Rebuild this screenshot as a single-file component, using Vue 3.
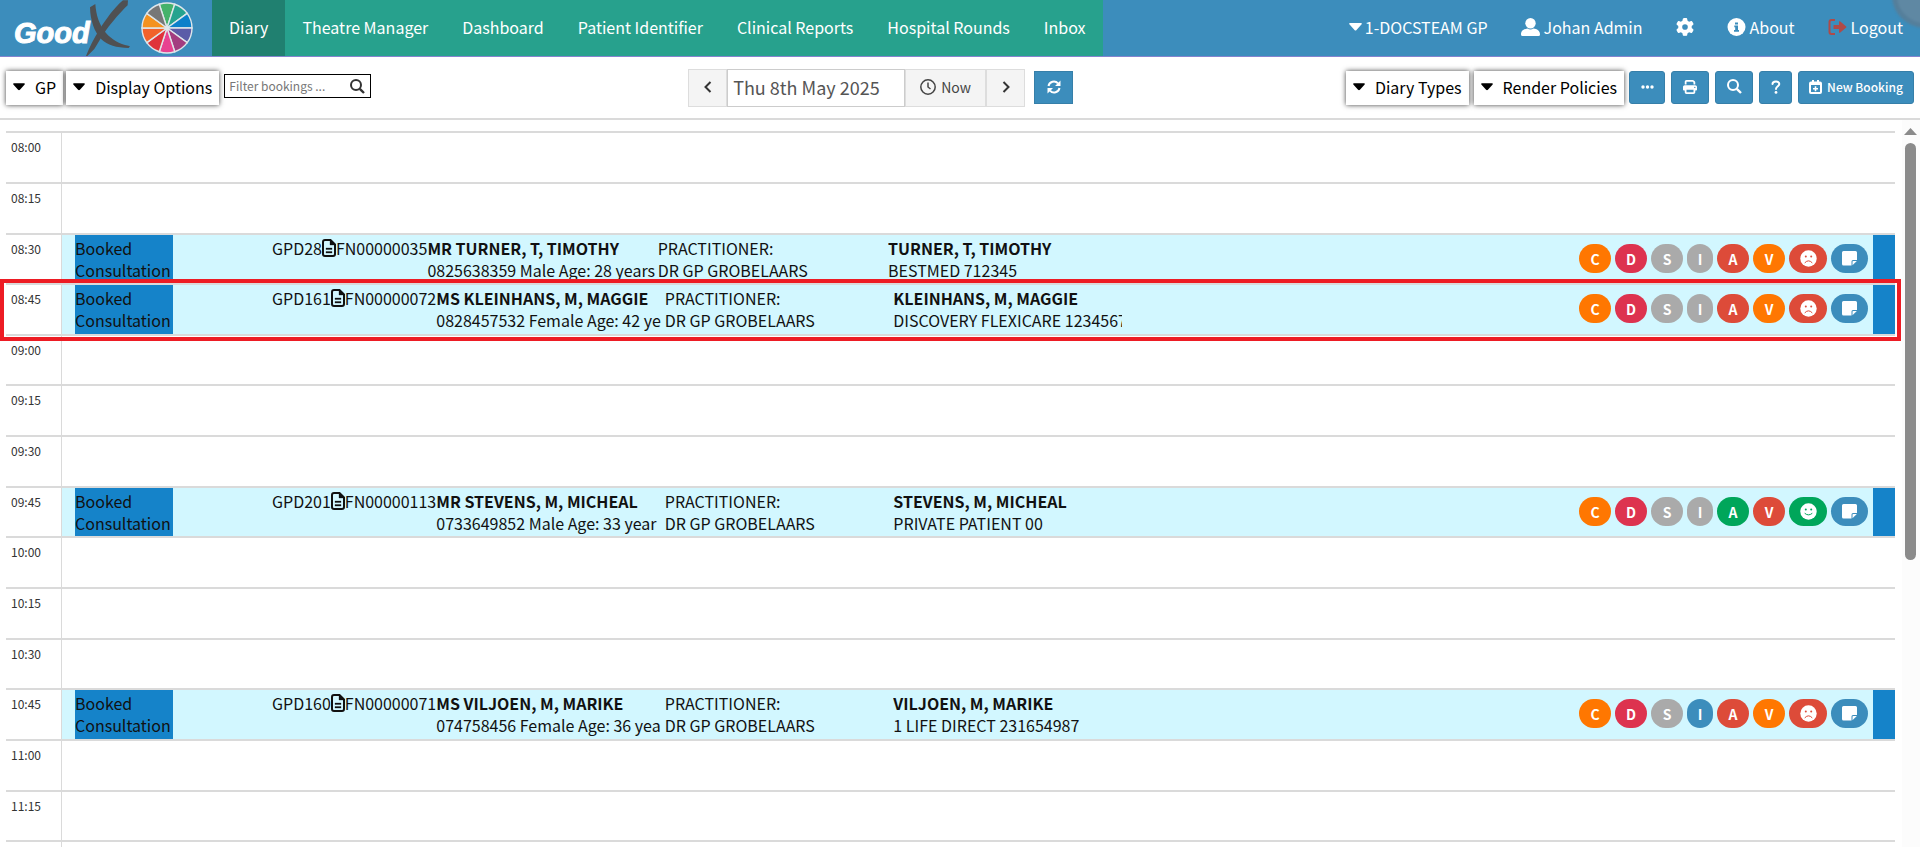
<script setup>
import { ref } from 'vue'

const tabs = ['Diary', 'Theatre Manager', 'Dashboard', 'Patient Identifier', 'Clinical Reports', 'Hospital Rounds', 'Inbox']
const filter = ref('')
const date = ref('Thu 8th May 2025')

const wheelColours = ['#45b26b', '#26a38f', '#0b80ca', '#5b5ca8', '#a33d80', '#e84291', '#df333a', '#f1622a', '#f4921f', '#777777']
const wheel = wheelColours.map((colour, i) => {
  const point = (deg) => {
    const a = (deg * Math.PI) / 180
    return `${(167 + 25 * Math.sin(a)).toFixed(2)} ${(28 - 25 * Math.cos(a)).toFixed(2)}`
  }
  return { colour, d: `M167 28L${point(i * 36 - 18)}A25 25 0 0 1 ${point(i * 36 + 18)}Z` }
})

const badges = (s) => {
  const tones = s.split(' ')
  return ['C', 'D', 'S', 'I', 'A', 'V'].map((letter, i) => ({ letter, tone: tones[i] }))
}

const bookings = {
  '08:30': {
    ref: 'GPD28', file: 'FN00000035', name: 'MR TURNER, T, TIMOTHY', detail: '0825638359 Male Age: 28 years',
    member: 'TURNER, T, TIMOTHY', scheme: 'BESTMED 712345',
    badges: badges('orange crimson grey grey red orange'), happy: false
  },
  '08:45': {
    ref: 'GPD161', file: 'FN00000072', name: 'MS KLEINHANS, M, MAGGIE', detail: '0828457532 Female Age: 42 ye',
    member: 'KLEINHANS, M, MAGGIE', scheme: 'DISCOVERY FLEXICARE 1234567',
    badges: badges('orange crimson grey grey red orange'), happy: false, marked: true
  },
  '09:45': {
    ref: 'GPD201', file: 'FN00000113', name: 'MR STEVENS, M, MICHEAL', detail: '0733649852 Male Age: 33 year',
    member: 'STEVENS, M, MICHEAL', scheme: 'PRIVATE PATIENT 00',
    badges: badges('orange crimson grey grey green red'), happy: true
  },
  '10:45': {
    ref: 'GPD160', file: 'FN00000071', name: 'MS VILJOEN, M, MARIKE', detail: '074758456 Female Age: 36 yea',
    member: 'VILJOEN, M, MARIKE', scheme: '1 LIFE DIRECT 231654987',
    badges: badges('orange crimson grey blue red orange'), happy: false
  }
}

const slots = Array.from({ length: 15 }, (_, i) => {
  const minutes = 480 + i * 15
  const time = `${String(Math.floor(minutes / 60)).padStart(2, '0')}:${String(minutes % 60).padStart(2, '0')}`
  return { time, booking: bookings[time] }
})
</script>

<template>
  <div class="app">
    <header class="header">
      <a href="#" class="brand" aria-label="GoodX">
        <svg width="212" height="56" viewBox="0 0 212 56">
          <text x="14" y="43" class="brand-text">Good</text>
          <g transform="scale(.3333)" fill="#4f5052">
            <path d="M270 22L286 12C288 45 298 75 318 99C336 119 358 132 385 137L390 139L386 144C350 144 322 135 304 118C283 96 271 62 270 22Z" />
            <path d="M369 1H384L383 16C362 36 338 64 318 91C305 109 294 130 283 147L262 168H258C268 143 282 115 299 88C319 57 341 25 369 1Z" />
          </g>
          <g stroke="#dfe6ea" stroke-width="1.4">
            <path v-for="w in wheel" :key="w.colour" :d="w.d" :fill="w.colour" />
          </g>
          <circle cx="167" cy="28" r="2" fill="#dfe6ea" />
        </svg>
      </a>
      <nav class="tabs">
        <a v-for="(tab, i) in tabs" :key="tab" href="#" class="tab" :class="{ active: i === 0 }">{{ tab }}</a>
      </nav>
      <nav class="account">
        <a href="#" class="account-item caret-item">
          <svg width="13" height="8" viewBox="0 0 13 8"><path d="M1 0H12Q13.500 .5 12.400 1.600L7.500 7Q6.500 8 5.500 7L.6 1.600Q-.5 .5 1 0Z" fill="#fff" /></svg>
          1-DOCSTEAM GP
        </a>
        <a href="#" class="account-item">
          <svg width="19" height="18" viewBox="0 0 19 18" fill="#fff"><ellipse cx="9.500" cy="5.300" rx="5.200" ry="5.300" /><path d="M0 16.500C0 12.500 3 11 6.500 10.500Q9.500 12.500 12.500 10.500C16 11 19 12.500 19 16.500Q19 18 17.500 18H1.500Q0 18 0 16.500Z" /></svg>
          Johan Admin
        </a>
        <a href="#" class="account-item" aria-label="Settings">
          <svg width="18" height="18" viewBox="0 0 512 512" fill="#fff"><path d="M495.9 166.6c3.2 8.7 .5 18.4-6.4 24.6l-43.3 39.4c1.1 8.3 1.7 16.800 1.7 25.400s-.6 17.100-1.700 25.400l43.300 39.400c6.900 6.200 9.600 15.900 6.400 24.600c-4.400 11.900-9.700 23.300-15.800 34.300l-4.700 8.100c-6.600 11-14 21.400-22.100 31.200c-5.900 7.200-15.700 9.600-24.500 6.800l-55.700-17.700c-13.400 10.300-28.200 18.900-44 25.400l-12.500 57.100c-2 9.100-9 16.300-18.200 17.800c-13.800 2.300-28 3.500-42.500 3.500s-28.700-1.200-42.500-3.500c-9.200-1.500-16.200-8.700-18.200-17.800l-12.500-57.100c-15.800-6.500-30.600-15.100-44-25.400L83.100 425.900c-8.800 2.800-18.600 .3-24.500-6.800c-8.100-9.800-15.500-20.200-22.100-31.200l-4.700-8.100c-6.100-11-11.400-22.400-15.800-34.300c-3.200-8.700-.5-18.400 6.400-24.600l43.300-39.400C64.600 273.100 64 264.600 64 256s.6-17.100 1.700-25.400L22.400 191.200c-6.900-6.200-9.600-15.900-6.400-24.600c4.400-11.900 9.700-23.300 15.800-34.300l4.700-8.100c6.600-11 14-21.400 22.100-31.200c5.900-7.200 15.700-9.600 24.500-6.800l55.700 17.700c13.400-10.300 28.200-18.900 44-25.400l12.500-57.100c2-9.100 9-16.300 18.200-17.800C227.300 1.200 241.500 0 256 0s28.700 1.200 42.500 3.500c9.200 1.500 16.200 8.700 18.200 17.800l12.500 57.100c15.800 6.500 30.600 15.100 44 25.400l55.700-17.700c8.800-2.800 18.600-.3 24.500 6.800c8.100 9.800 15.500 20.200 22.100 31.200l4.700 8.100c6.100 11 11.400 22.400 15.800 34.300zM256 336a80 80 0 1 0 0-160 80 80 0 1 0 0 160z" /></svg>
        </a>
        <a href="#" class="account-item">
          <svg width="19" height="18" viewBox="0 0 19 18"><circle cx="9.500" cy="9" r="9" fill="#fff" /><path d="M8 4.500h3v2H8zM7.300 7.500H11v4.500h1v1.700H7V12h1.200V9.200h-.9z" fill="#3c8dbc" /></svg>
          About
        </a>
        <a href="#" class="account-item">
          <svg width="19" height="18" viewBox="0 0 19 18"><path d="M7 2H3.500Q1.500 2 1.500 4V14Q1.500 16 3.500 16H7" fill="none" stroke="#b04a48" stroke-width="2" /><path d="M6 7H11V3.500Q11.500 2.800 12.300 3.500L18.200 8.400Q18.800 9 18.200 9.600L12.300 14.500Q11.500 15.200 11 14.500V11H6Q5.500 11 5.500 10.500V7.500Q5.500 7 6 7Z" fill="#b04a48" /></svg>
          Logout
        </a>
      </nav>
      <span class="bubble"></span>
    </header>

    <div class="toolbar">
      <div class="tool-left">
        <button type="button" class="menu">
          <svg width="12" height="8" viewBox="0 0 13 8"><path d="M1 0H12Q13.500 .5 12.400 1.600L7.500 7Q6.500 8 5.500 7L.6 1.600Q-.5 .5 1 0Z" /></svg>GP
        </button>
        <button type="button" class="menu">
          <svg width="12" height="8" viewBox="0 0 13 8"><path d="M1 0H12Q13.500 .5 12.400 1.600L7.500 7Q6.500 8 5.500 7L.6 1.600Q-.5 .5 1 0Z" /></svg>Display Options
        </button>
        <label class="filter">
          <input v-model="filter" type="text" placeholder="Filter bookings ..." aria-label="Filter bookings">
          <svg width="15" height="15" viewBox="0 0 15 15" fill="none" stroke="#333" stroke-width="2"><circle cx="6" cy="6" r="5" /><path d="M9.800 9.800L14 14" stroke-width="2.400" /></svg>
        </label>
      </div>

      <div class="tool-centre">
        <div class="date-group">
          <button type="button" class="step" aria-label="Previous day"><svg width="8" height="12" viewBox="0 0 8 12"><path d="M6.500 1L1.500 6L6.500 11" fill="none" stroke="#333" stroke-width="2" /></svg></button>
          <input v-model="date" class="date" type="text" aria-label="Date">
          <button type="button" class="now">
            <svg width="16" height="16" viewBox="0 0 16 16" fill="none" stroke="#444" stroke-width="1.500"><circle cx="8" cy="8" r="7.200" /><path d="M8 3.500V8L10.500 10" /></svg>
            Now
          </button>
          <button type="button" class="step" aria-label="Next day"><svg width="8" height="12" viewBox="0 0 8 12"><path d="M1.500 1L6.500 6L1.500 11" fill="none" stroke="#333" stroke-width="2" /></svg></button>
        </div>
        <button type="button" class="refresh" aria-label="Refresh">
          <svg width="14" height="14" viewBox="0 0 14 14"><path d="M1.500 6A5.500 5.500 0 0 1 11 3.300M12.500 8A5.500 5.500 0 0 1 3 10.700" fill="none" stroke="#fff" stroke-width="2" /><path d="M13.500 .5V6H8zM.5 13.500V8H6z" fill="#fff" /></svg>
        </button>
      </div>

      <div class="tool-right">
        <button type="button" class="menu">
          <svg width="12" height="8" viewBox="0 0 13 8"><path d="M1 0H12Q13.500 .5 12.400 1.600L7.500 7Q6.500 8 5.500 7L.6 1.600Q-.5 .5 1 0Z" /></svg>Diary Types
        </button>
        <button type="button" class="menu">
          <svg width="12" height="8" viewBox="0 0 13 8"><path d="M1 0H12Q13.500 .5 12.400 1.600L7.500 7Q6.500 8 5.500 7L.6 1.600Q-.5 .5 1 0Z" /></svg>Render Policies
        </button>
        <div class="actions">
          <button type="button" class="action narrow" aria-label="More"><svg width="13" height="4" viewBox="0 0 13 4" fill="#fff"><circle cx="2" cy="2" r="1.700" /><circle cx="6.500" cy="2" r="1.700" /><circle cx="11" cy="2" r="1.700" /></svg></button>
          <button type="button" class="action" aria-label="Print"><svg width="14" height="14" viewBox="0 0 512 512" fill="#fff"><path d="M128 0C92.700 0 64 28.700 64 64v96h64V64H354.700L384 93.300V160h64V93.300c0-17-6.700-33.300-18.700-45.300L400 18.700C388 6.700 371.700 0 354.700 0H128zM384 352v32 64H128V384 368 352H384zm64 32h32c17.700 0 32-14.300 32-32V256c0-35.300-28.700-64-64-64H64c-35.300 0-64 28.700-64 64v96c0 17.700 14.300 32 32 32H64v64c0 35.300 28.700 64 64 64H384c35.300 0 64-28.700 64-64V384zM432 248a24 24 0 1 1 0 48 24 24 0 1 1 0-48z" /></svg></button>
          <button type="button" class="action" aria-label="Search"><svg width="15" height="15" viewBox="0 0 15 15" fill="none" stroke="#fff" stroke-width="2"><circle cx="6" cy="6" r="5" /><path d="M9.800 9.800L14 14" stroke-width="2.400" /></svg></button>
          <button type="button" class="action help" aria-label="Help"><svg width="10" height="14" viewBox="0 0 10 14"><path d="M1.500 4C1.500 1 8.300 .4 8.300 4C8.300 6.200 5 6.300 5 9" fill="none" stroke="#fff" stroke-width="2" stroke-linecap="round" /><circle cx="5" cy="12.400" r="1.400" fill="#fff" /></svg></button>
          <button type="button" class="action booking-new">
            <svg width="13" height="14" viewBox="0 0 13 14"><path d="M1 3.500Q1 2.500 2 2.500H11Q12 2.500 12 3.500V12Q12 13 11 13H2Q1 13 1 12Z" fill="none" stroke="#fff" stroke-width="2" /><path d="M1 2.500H12V5H1zM3 0H5V3H3zM8 0H10V3H8z" fill="#fff" /><path d="M6.500 6.300V11.300M4 8.800H9" stroke="#fff" stroke-width="1.600" /></svg>
            New Booking
          </button>
        </div>
      </div>
    </div>

    <main class="schedule">
      <table class="diary" aria-label="Diary">
        <tbody>
          <tr v-for="slot in slots" :key="slot.time">
            <th scope="row">{{ slot.time }}</th>
            <td>
              <div v-if="slot.booking" class="booking">
                <div class="status"><span>Booked Consultation</span></div>
                <div class="file">
                  {{ slot.booking.ref }}<svg width="14" height="18" viewBox="0 0 14 18"><path d="M3 1H8.500L13 5.500V15Q13 17 11 17H3Q1 17 1 15V3Q1 1 3 1Z" fill="none" stroke="#111" stroke-width="2" /><path d="M8 1V6H13ZM4 9H10V10.500H4ZM4 12.500H10V14H4Z" fill="#111" stroke="#111" stroke-width=".3" /></svg>{{ slot.booking.file }}
                </div>
                <div class="col"><strong>{{ slot.booking.name }}</strong><br>{{ slot.booking.detail }}</div>
                <div class="col">PRACTITIONER:<br>DR GP GROBELAARS</div>
                <div class="col"><strong>{{ slot.booking.member }}</strong><br>{{ slot.booking.scheme }}</div>
                <div class="col"></div>
                <div class="col"></div>
                <div class="badges">
                  <button v-for="b in slot.booking.badges" :key="b.letter" type="button" class="badge" :class="[b.tone, { slim: b.letter === 'I' }]">{{ b.letter }}</button>
                  <button type="button" class="badge mood" :class="slot.booking.happy ? 'green' : 'red'" :aria-label="slot.booking.happy ? 'Happy' : 'Unhappy'">
                    <svg width="17" height="17" viewBox="0 0 17 17">
                      <circle cx="8.500" cy="8.500" r="8.200" fill="#fff" />
                      <g :fill="slot.booking.happy ? '#00a65a' : '#dd4b39'"><circle cx="5.800" cy="6.600" r="1" /><circle cx="11.200" cy="6.600" r="1" /></g>
                      <path :d="slot.booking.happy ? 'M5 10.500Q8.500 13.500 12 10.500' : 'M5 12.600Q8.500 8.800 12 12.600'" fill="none" :stroke="slot.booking.happy ? '#00a65a' : '#dd4b39'" stroke-width="1" stroke-linecap="round" />
                    </svg>
                  </button>
                  <button type="button" class="badge note blue" aria-label="Note">
                    <svg width="15" height="15" viewBox="0 0 15 15" fill="#fff"><path d="M1.500 0H13.500Q15 0 15 1.500V9H11Q9.500 9 9.500 10.500V14.500H1.500Q0 14.500 0 13V1.500Q0 0 1.500 0Z" /><path d="M10.500 14.300V10.800Q10.500 10 11.300 10H14.800Z" /></svg>
                  </button>
                </div>
                <div class="edge"></div>
              </div>
              <div v-if="slot.booking && slot.booking.marked" class="marker"></div>
            </td>
          </tr>
        </tbody>
      </table>
      <div class="rail" aria-hidden="true">
        <svg width="13" height="7" viewBox="0 0 13 7"><path d="M6.500 0L13 7H0Z" fill="#8b8b8b" /></svg>
        <div class="thumb"></div>
      </div>
    </main>
  </div>
</template>

<style>
body {
  margin: 0;
  background: #fff;
}
</style>

<style scoped>
.app,
.app * {
  box-sizing: border-box;
}
.app {
  display: flex;
  flex-direction: column;
  height: 100vh;
  overflow: hidden;
  font-family: "Noto Sans CJK SC", "Noto Sans", sans-serif;
  font-size: 16px;
  line-height: 22px;
  color: #111;
}
button,
input {
  margin: 0;
  font-family: inherit;
}
button {
  cursor: pointer;
}
svg {
  flex: none;
  display: block;
}

.header {
  position: relative;
  display: flex;
  flex: none;
  height: 57px;
  overflow: hidden;
  background: #3c8dbc;
  border-bottom: 1px solid #8484cf;
}
.brand {
  flex: none;
}
.brand-text {
  font: italic bold 29px "Liberation Sans", sans-serif;
  fill: #fff;
  stroke: #fff;
  stroke-width: 1px;
}
.tabs {
  display: flex;
  background: #27a18d;
}
.tab {
  display: flex;
  align-items: center;
  padding: 0 17px 2px;
  color: #fff;
  text-decoration: none;
  white-space: nowrap;
}
.tab.active {
  background: #208070;
}
.account {
  display: flex;
  gap: 33px;
  margin-left: auto;
  padding: 0 17px 2px 0;
}
.account-item {
  display: flex;
  align-items: center;
  gap: 4px;
  color: #fff;
  text-decoration: none;
  white-space: nowrap;
}
.caret-item {
  gap: 3px;
}
.bubble {
  position: absolute;
  top: -38px;
  right: -38px;
  width: 66px;
  height: 66px;
  border: 5px solid #557f9b;
  border-radius: 50%;
  background: #5f88a3;
  filter: blur(1px);
}

.toolbar {
  display: grid;
  grid-template-columns: auto 1fr auto;
  flex: none;
  height: 63px;
  padding: 12px 6px 0;
  border-bottom: 2px solid #dadada;
}
.tool-left,
.tool-right,
.tool-centre,
.date-group,
.actions {
  display: flex;
  align-items: flex-start;
}
.tool-left {
  gap: 3px;
  padding-top: 2px;
}
.tool-right {
  justify-content: flex-end;
  gap: 5px;
  padding-top: 2px;
}
.menu {
  display: flex;
  align-items: center;
  gap: 10px;
  height: 34px;
  padding: 0 7px 2px;
  border: 0;
  background: #fff;
  box-shadow: 0 0 5px rgba(0, 0, 0, .75);
  color: #000;
  font-size: 16px;
  white-space: nowrap;
}
.filter {
  display: flex;
  align-items: center;
  width: 147px;
  height: 24px;
  margin: 3px 0 0 2px;
  padding: 0 5px 0 4px;
  border: 1px solid #000;
}
.filter input {
  flex: 1;
  min-width: 0;
  height: 20px;
  padding: 0 0 2px;
  border: 0;
  outline: 0;
  background: none;
  font-size: 12px;
  color: #333;
}
.filter input::placeholder {
  color: #777;
  opacity: 1;
}
.tool-centre {
  justify-content: center;
  gap: 9px;
  padding-left: 44px;
}
.date-group button {
  display: flex;
  align-items: center;
  justify-content: center;
  gap: 5px;
  height: 38px;
  padding: 0 0 3px;
  border: 1px solid #ddd;
  background: #f4f4f4;
  color: #444;
  font-size: 14px;
}
.step {
  width: 39px;
}
.now {
  width: 81px;
}
.date {
  width: 178px;
  height: 38px;
  padding: 0 5px 2px;
  border: 1px solid #ccc;
  outline: 0;
  background: #fff;
  color: #555;
  font-size: 18px;
}
.refresh,
.action {
  display: flex;
  align-items: center;
  justify-content: center;
  height: 33px;
  padding: 0 0 2px;
  border: 1px solid #367fa9;
  background: #3c8dbc;
  color: #fff;
}
.refresh {
  width: 39px;
  margin-top: 2px;
}
.actions {
  gap: 6px;
}
.action {
  width: 38px;
  border-radius: 3px;
}
.narrow {
  width: 36px;
}
.help {
  width: 33px;
}
.booking-new {
  gap: 5px;
  width: 116px;
  font-size: 12px;
  font-weight: 500;
  white-space: nowrap;
}

.schedule {
  display: flex;
  flex: 1;
  align-items: flex-start;
  min-height: 0;
  padding-left: 6px;
  overflow: hidden;
}
.diary {
  flex: 1;
  margin-top: 11px;
  border-collapse: separate;
  border-spacing: 0;
  table-layout: fixed;
}
tr {
  height: 51px;
}
tr:nth-child(3),
tr:nth-child(3n + 5) {
  height: 50px;
}
th,
td {
  padding: 0;
  border-top: 2px solid #dadada;
  vertical-align: top;
}
th {
  width: 55px;
  padding: 3px 0 0 5px;
  font-size: 12px;
  font-weight: 400;
  text-align: left;
  color: #333;
}
td {
  position: relative;
  border-left: 1px solid #dadada;
}
.booking {
  display: flex;
  height: 49px;
  padding-left: 13px;
  overflow: hidden;
  background: #d2f7ff;
  white-space: nowrap;
}
tr:nth-child(3) .booking,
tr:nth-child(3n + 5) .booking {
  height: 48px;
}
.status {
  flex: none;
  width: 197px;
}
.status span {
  display: block;
  width: 98px;
  height: 100%;
  padding-top: 2px;
  background: #1583c9;
  white-space: normal;
}
.file {
  display: flex;
  flex: none;
  height: 26px;
  padding-top: 2px;
}
.file svg {
  margin-top: 2px;
}
.col {
  flex: 1 1 0;
  min-width: 0;
  height: 46px;
  padding-top: 2px;
  overflow: hidden;
}
.col strong {
  font-weight: 700;
}
.badges {
  display: flex;
  flex: none;
  align-items: flex-start;
  gap: 4px;
  width: 294px;
  padding-top: 9px;
}
.badge {
  display: flex;
  align-items: center;
  justify-content: center;
  width: 32px;
  height: 29px;
  padding: 0;
  border: 0;
  border-radius: 15px;
  color: #fff;
  font-size: 14px;
  font-weight: 700;
}
.slim {
  width: 26px;
}
.mood {
  width: 38px;
}
.note {
  width: 37px;
}
.orange { background: #ff7701; }
.crimson { background: #dd334f; }
.grey { background: #aaa; }
.red { background: #dd4b39; }
.green { background: #00a65a; }
.blue { background: #3c8dbc; }
.edge {
  flex: none;
  width: 22px;
  background: #1583c9;
}
.marker {
  position: absolute;
  z-index: 2;
  top: -6px;
  right: -6px;
  bottom: -7px;
  left: -62px;
  border: 4px solid #ed1c24;
  pointer-events: none;
}
.rail {
  display: flex;
  flex-direction: column;
  flex: none;
  align-items: center;
  align-self: stretch;
  gap: 8px;
  width: 18px;
  margin-left: 7px;
  padding: 8px 3px 0 2px;
  background: #fcfcfc;
}
.thumb {
  width: 11px;
  height: 58%;
  border-radius: 6px;
  background: #8b8b8b;
}
</style>
